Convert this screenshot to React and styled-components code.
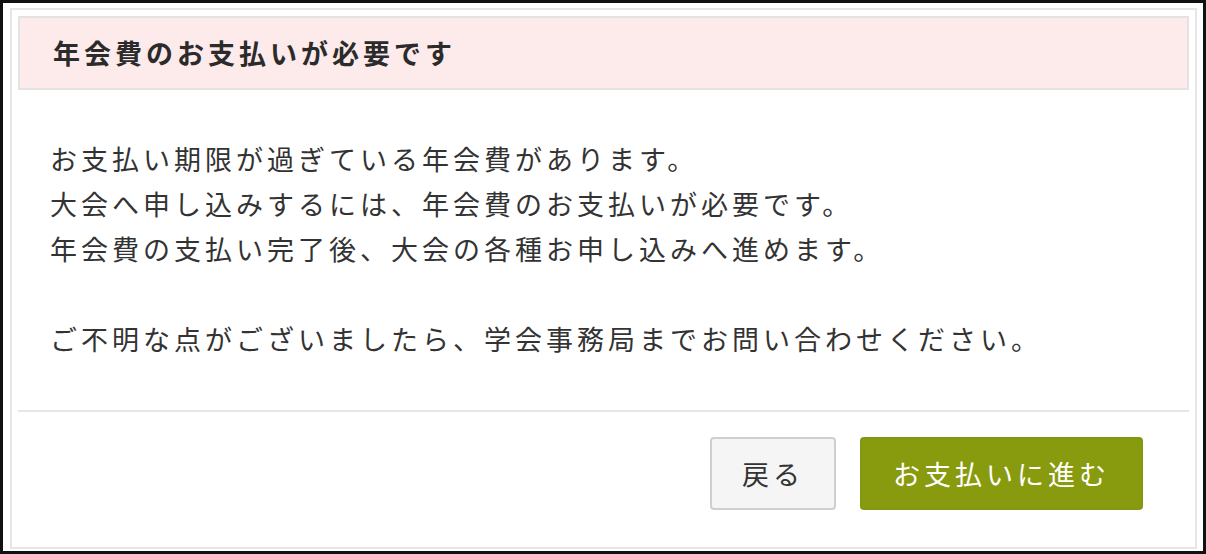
import React from "react"
import styled, { createGlobalStyle } from "styled-components"

const GlobalStyle = createGlobalStyle`
    html, body {
        margin: 0;
        padding: 0;
        background: #ffffff;
    }
    body {
        font-family: "Noto Sans CJK JP", "Noto Sans", sans-serif;
        color: #333333;
    }
`

const Frame = styled.div`
    box-sizing: border-box;
    width: 1206px;
    height: 554px;
    border: 3px solid #111111;
    padding: 5px 6px 2px 7px;
    background: #ffffff;
    display: flex;
`

const Modal = styled.section`
    box-sizing: border-box;
    flex: 1;
    border: 2px solid #e6e6e6;
    padding: 6px 6px 0 6px;
    display: flex;
    flex-direction: column;
`

const ModalHeader = styled.header`
    box-sizing: border-box;
    height: 74px;
    background: #fdeaea;
    border: 2px solid #e3e3e3;
    display: flex;
    align-items: center;
    padding: 0 0 2px 33px;
`

const ModalTitle = styled.h2`
    margin: 0;
    font-size: 27px;
    font-weight: bold;
    letter-spacing: 4px;
    color: #2b2b2b;
`

const ModalBody = styled.div`
    padding: 46px 32px 49px 32px;
    border-bottom: 2px solid #e6e6e6;
`

const Paragraph = styled.p`
    margin: 0;
    font-size: 27px;
    line-height: 45px;
    letter-spacing: 4px;
    color: #333333;
    & + & {
        margin-top: 45px;
    }
`

const ModalFooter = styled.footer`
    display: flex;
    justify-content: flex-end;
    gap: 24px;
    padding: 25px 46px 0 0;
`

const Button = styled.button`
    box-sizing: border-box;
    height: 73px;
    padding: 0 ${props => props.primary ? '31px' : '30px'};
    border-radius: 4px;
    border: 2px solid ${props => props.primary ? '#849710' : '#cfcfcf'};
    background: ${props => props.primary ? '#889b0f' : '#f5f5f5'};
    color: ${props => props.primary ? '#ffffff' : '#333333'};
    font-family: "Noto Sans CJK JP", "Noto Sans", sans-serif;
    font-size: 27px;
    letter-spacing: 4px;
    cursor: pointer;
`

export default function App() {
    return (
        <>
            <GlobalStyle />
            <Frame>
                <Modal>
                    <ModalHeader>
                        <ModalTitle>年会費のお支払いが必要です</ModalTitle>
                    </ModalHeader>
                    <ModalBody>
                        <Paragraph>
                            お支払い期限が過ぎている年会費があります。<br />
                            大会へ申し込みするには、年会費のお支払いが必要です。<br />
                            年会費の支払い完了後、大会の各種お申し込みへ進めます。
                        </Paragraph>
                        <Paragraph>
                            ご不明な点がございましたら、学会事務局までお問い合わせください。
                        </Paragraph>
                    </ModalBody>
                    <ModalFooter>
                        <Button>戻る</Button>
                        <Button primary>お支払いに進む</Button>
                    </ModalFooter>
                </Modal>
            </Frame>
        </>
    )
}
